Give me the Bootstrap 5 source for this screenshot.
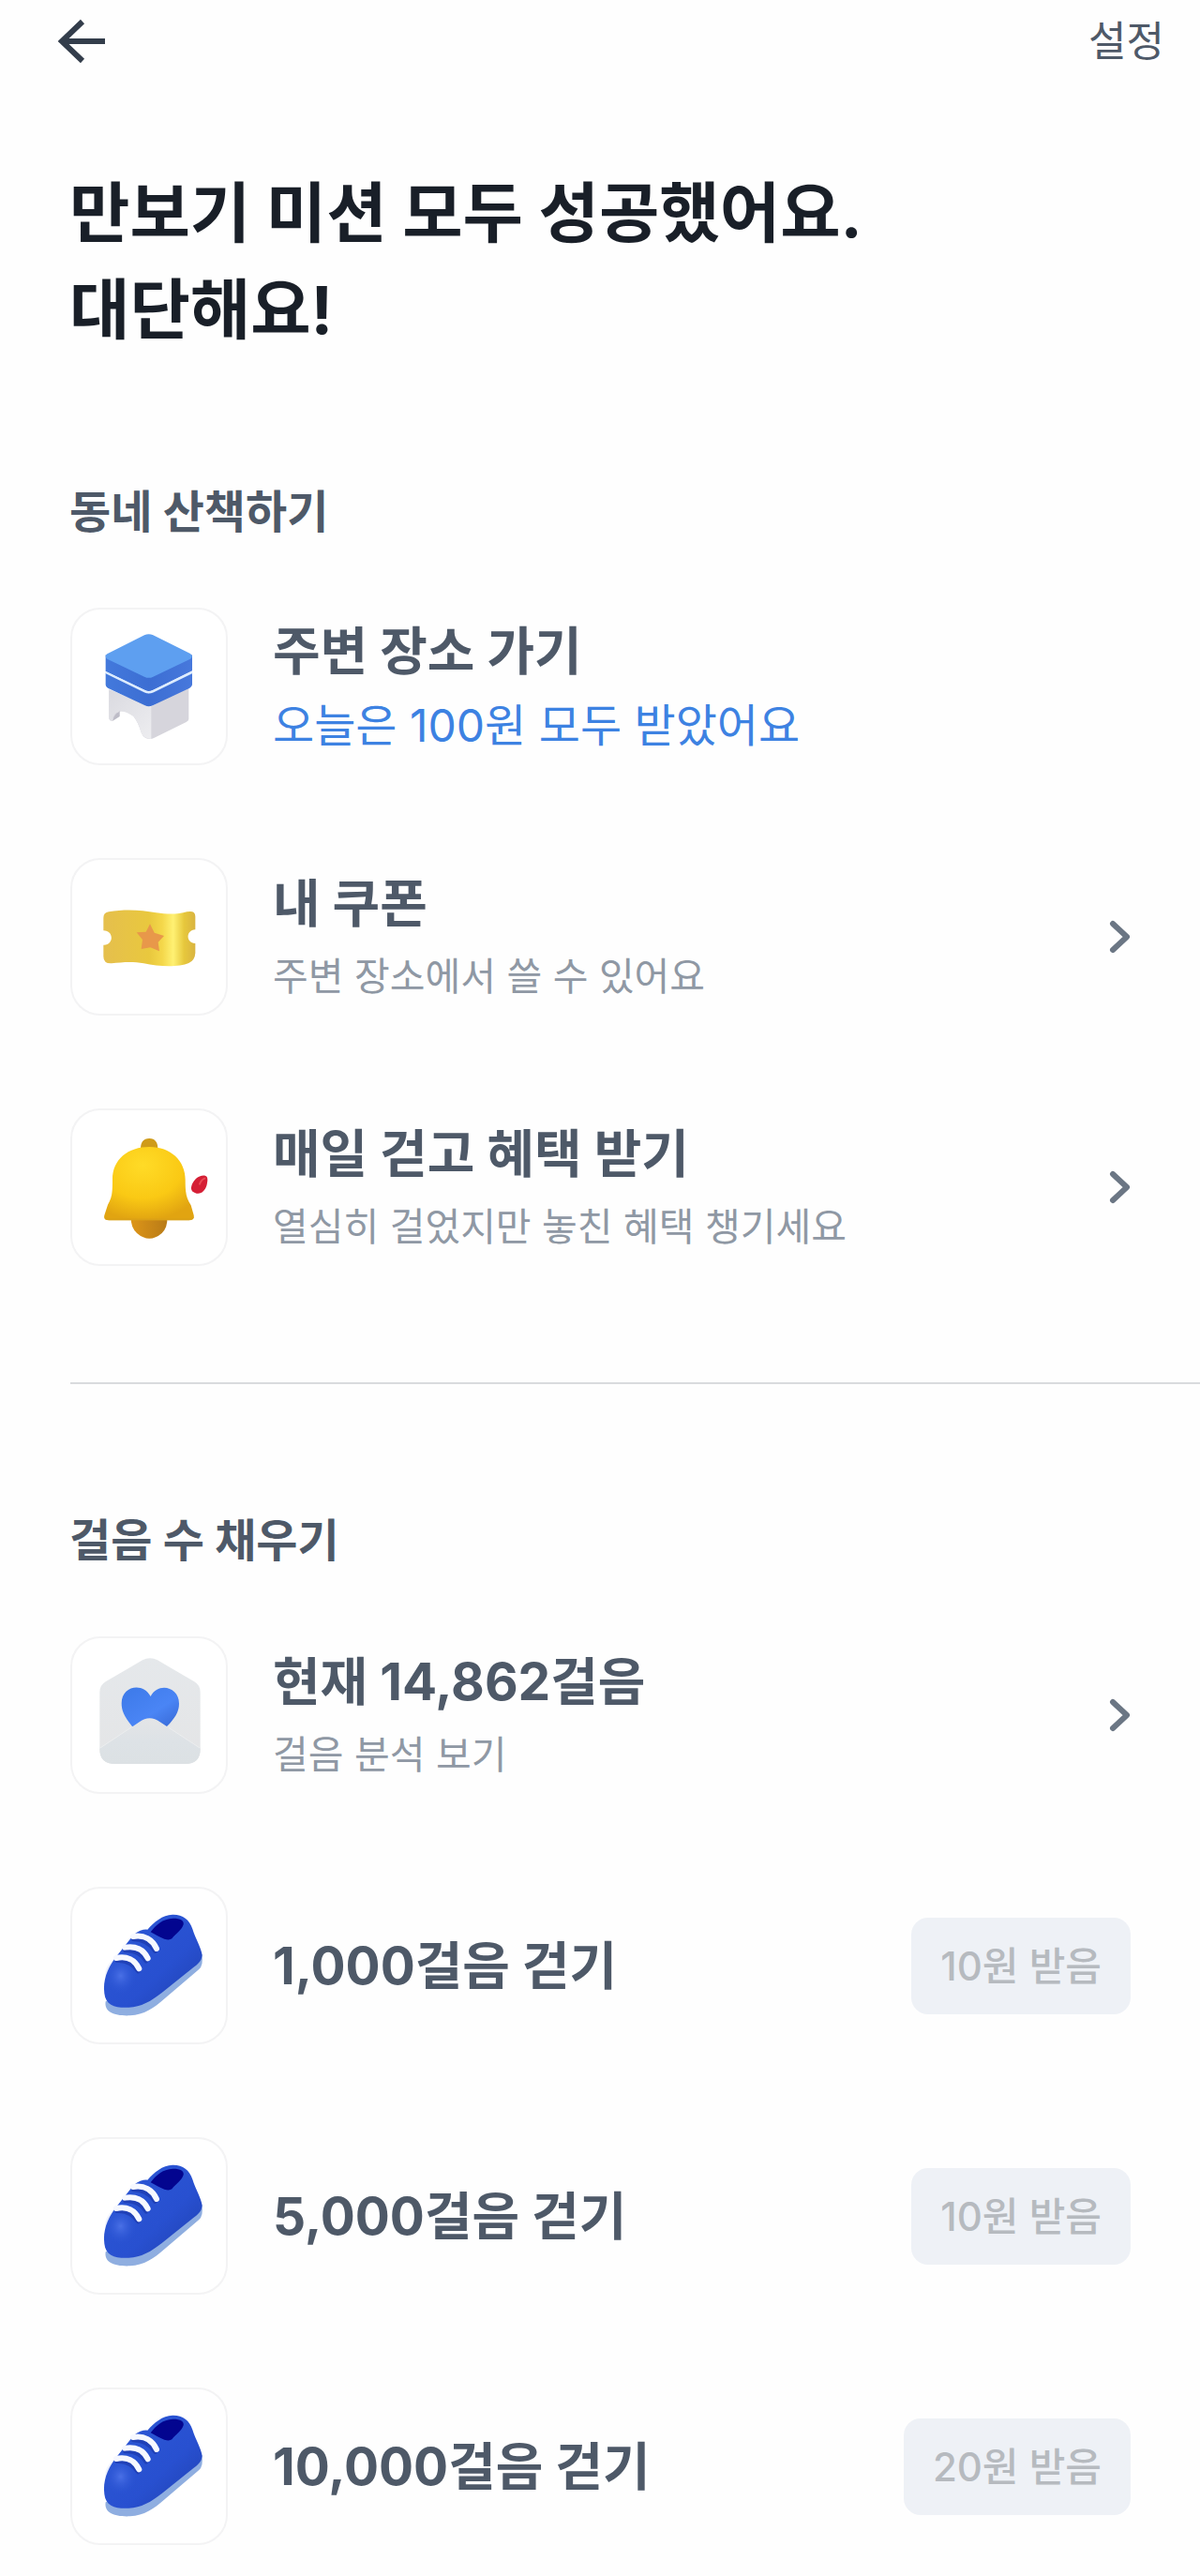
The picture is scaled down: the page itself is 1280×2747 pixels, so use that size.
<!DOCTYPE html>
<html lang="ko">
<head>
<meta charset="utf-8">
<meta name="viewport" content="width=device-width, initial-scale=1">
<title>만보기</title>
<link rel="stylesheet" href="https://cdn.jsdelivr.net/npm/bootstrap@5.3.0/dist/css/bootstrap.min.css">
<style>
  body { background: #fefefe; color: #4e5968; font-family: Inter, "Noto Sans CJK KR", sans-serif; }
  a { color: inherit; text-decoration: none; }
  .topbar { height: 88px; padding: 0 38px 0 60px; }
  .topbar svg { width: 56px; height: 56px; display: block; }
  .setting-link { font-size: 44px; line-height: 60px; color: #4e5968; }
  .page-title { font-size: 70px; line-height: 103px; font-weight: 700; color: #191f28; padding: 88px 74px 0; margin: 0; }
  .group-title { font-size: 48px; line-height: 64px; font-weight: 700; color: #4e5968; margin: 0; padding: 0 74px; }
  .walk-group { padding-top: 132px; }
  .step-group { padding-top: 135px; padding-bottom: 32px; }
  .missions { display: flex; flex-direction: column; gap: 99px; margin: 0; padding: 70px 74px 0 75px; list-style: none; }
  .mission { display: flex; align-items: center; gap: 48px; height: 168px; }
  .mission-text { padding-top: 6px; }
  .tile { flex: none; width: 168px; height: 168px; border: 2px solid #f3f3f4; border-radius: 32px; background: #fff; overflow: hidden; }
  .tile svg { display: block; width: 100%; height: 100%; }
  .mission-name { display: block; font-size: 55px; line-height: 78px; font-weight: 700; color: #4e5968; }
  .mission-note { display: block; font-size: 41px; line-height: 78px; color: #8f98a4; }
  .mission-note.reward { font-size: 48px; line-height: 82px; color: #3d82e2; }
  .chevron { flex: none; width: 24px; height: 38px; }
  .btn-got { font-size: 42px; line-height: 60px; font-weight: 500; padding: 22px 31px; height: 103px; border: 0; border-radius: 18px; }
  .btn-got:disabled { background: #eef1f6; color: #b6babf; opacity: 1; }
  .divider { height: 2px; margin: 124px 0 0 75px; border: 0; background: #d9dbde; opacity: 1; }
</style>
</head>
<body>
<svg width="0" height="0" class="position-absolute" aria-hidden="true">
  <defs>
    <linearGradient id="shoeBody" x1="0" y1="0" x2="1" y2="1">
      <stop offset="0" stop-color="#2c58d6"/><stop offset=".6" stop-color="#2850d0"/><stop offset="1" stop-color="#1f3fae"/>
    </linearGradient>
    <radialGradient id="shoeGlow"><stop offset="0" stop-color="#4a70e6"/><stop offset="1" stop-color="#2b55d4" stop-opacity="0"/></radialGradient>
    <symbol id="shoe" viewBox="51 43 492 492">
      <path d="M158 404C152 440 190 451 236 449C282 446 312 425 345 396L456 302Q472 288 466 252Z" fill="#8faee0"/>
      <path d="M154 378C149 336 163 302 186 268L248 190Q272 172 292 174C312 150 340 127 372 126C404 125 426 141 436 172C446 204 463 230 467 256C465 276 452 285 438 296L338 376C302 404 272 421 232 423C190 425 158 417 154 378Z" fill="url(#shoeBody)"/>
      <ellipse cx="206" cy="322" rx="52" ry="58" fill="url(#shoeGlow)"/>
      <path d="M302 182C318 160 340 139 374 138C398 138 410 146 407 158C401 176 383 187 370 203Q362 209 346 204C330 198 318 190 302 182Z" fill="#03058f"/>
      <g fill="none" stroke="#172f9d" stroke-width="12" stroke-linecap="round" opacity=".5">
        <path d="M246 206Q292 206 316 244"/><path d="M220 242Q264 238 288 276"/><path d="M194 274Q236 270 262 308"/>
      </g>
      <g fill="none" stroke="#f6f8ff" stroke-width="18" stroke-linecap="round">
        <path d="M246 196C282 190 308 206 321 235"/><path d="M220 231C254 225 280 238 293 266"/><path d="M192 265C226 257 252 272 265 299"/>
      </g>
    </symbol>
    <symbol id="next" viewBox="0 0 24 38">
      <path d="M5 5L20 19L5 33" fill="none" stroke="#6b7684" stroke-width="6" stroke-linecap="round" stroke-linejoin="round"/>
    </symbol>
  </defs>
</svg>

<header class="topbar d-flex align-items-center justify-content-between">
  <a href="#" aria-label="뒤로">
    <svg viewBox="0 0 56 56"><path d="M28 7L6 28L28 49M6 28H52" fill="none" stroke="#333d4b" stroke-width="6"/></svg>
  </a>
  <a href="#" class="setting-link">설정</a>
</header>

<main>
  <h1 class="page-title">만보기 미션 모두 성공했어요.<br>대단해요!</h1>

  <section class="walk-group">
    <h2 class="group-title">동네 산책하기</h2>
    <ul class="missions">
      <li class="mission">
        <span class="tile">
          <svg viewBox="51 60 492 492" aria-hidden="true">
            <defs>
              <linearGradient id="seatSide"><stop offset="0" stop-color="#4379dc"/><stop offset=".5" stop-color="#3c6ed3"/><stop offset="1" stop-color="#4778dc"/></linearGradient>
              <linearGradient id="legLeft" x1="0" y1="0" x2="1" y2="1"><stop offset="0" stop-color="#dadae0"/><stop offset="1" stop-color="#ededf0"/></linearGradient>
            </defs>
            <path d="M169 316L300 372L424 305V410Q424 416 416 420L314 470Q300 478 286 471Q276 466 272 454Q262 420 248 403Q232 386 210 383Q194 382 192 403L181 416Q168 418 169 404Z" fill="#d6d5dc"/>
            <path d="M169 316L304 372V474Q279 474 272 454Q262 420 248 403Q218 380 196 388Q180 395 181 416Q168 418 169 404Z" fill="url(#legLeft)"/>
            <path d="M181 416Q184 396 203 385V402Z" fill="#bdbcc7"/>
            <path d="M158 262L296 328L435 260V301Q434 307 427 311L309 367Q296 373 284 367L165 311Q158 307 158 301Z" fill="url(#seatSide)"/>
            <path d="M158 205L296 270L435 205V256L309 318Q296 324 284 318L158 258Z" fill="url(#seatSide)"/>
            <path d="M158 261L284 322Q296 328 309 322L435 261" fill="none" stroke="#dcecff" stroke-width="7"/>
            <path d="M163 202L282 142Q296 135 310 142L429 201Q440 210 429 218L310 275Q296 282 282 275L163 218Q153 210 163 202Z" fill="#5e9ff0"/>
          </svg>
        </span>
        <div class="mission-text">
          <span class="mission-name">주변 장소 가기</span>
          <span class="mission-note reward">오늘은 100원 모두 받았어요</span>
        </div>
      </li>
      <li>
        <a href="#" class="mission">
          <span class="tile">
            <svg viewBox="51 51 492 492" aria-hidden="true">
              <defs><linearGradient id="gold"><stop offset="0" stop-color="#e5bf4d"/><stop offset=".5" stop-color="#e9c83e"/><stop offset=".64" stop-color="#f4d74a"/><stop offset=".76" stop-color="#fff173"/><stop offset=".88" stop-color="#e6c73c"/><stop offset="1" stop-color="#d9b441"/></linearGradient></defs>
              <path d="M151 236Q151 220 168 217C220 208 272 211 320 220C358 226 392 225 418 217Q445 211 445 232V274C415 275 413 317 445 318V348Q444 372 424 381C392 395 330 393 280 382C244 375 212 378 177 382Q151 383 151 360V323C184 325 186 277 151 277Z" fill="url(#gold)"/>
              <path d="M300 256L314 284L345 294L326 314L330 343L301 331L272 336L276 306L257 283L287 281Z" fill="#e8984a"/>
            </svg>
          </span>
          <div class="mission-text flex-grow-1">
            <span class="mission-name">내 쿠폰</span>
            <span class="mission-note">주변 장소에서 쓸 수 있어요</span>
          </div>
          <svg class="chevron" aria-hidden="true"><use href="#next"/></svg>
        </a>
      </li>
      <li>
        <a href="#" class="mission">
          <span class="tile">
            <svg viewBox="51 46 492 492" aria-hidden="true">
              <defs>
                <radialGradient id="bellBody" cx=".43" cy=".25" r=".75"><stop offset="0" stop-color="#ffdb27"/><stop offset=".6" stop-color="#fac914"/><stop offset="1" stop-color="#e1a411"/></radialGradient>
                <linearGradient id="clapper"><stop offset="0" stop-color="#dd9518"/><stop offset="1" stop-color="#b87b17"/></linearGradient>
              </defs>
              <path d="M239 388H355Q357 420 338 439Q298 474 258 439Q238 420 239 388Z" fill="url(#clapper)"/>
              <path d="M270 172Q269 136 298 136Q326 137 325 172Z" fill="#cf9b19"/>
              <path d="M180 268C180 202 230 163 298 163C366 163 413 207 413 268C413 312 416 326 431 350L440 381Q443 398 426 398H168Q150 398 154 382L165 348C179 324 180 308 180 268Z" fill="url(#bellBody)"/>
              <path d="M157 388Q159 395 170 395H424Q437 395 439 387" fill="none" stroke="#d9a018" stroke-width="5" opacity=".7"/>
              <path d="M432 292C437 270 455 253 476 255Q487 257 483 278C481 298 467 315 449 312Q430 307 432 292Z" fill="#d51f35"/>
              <path d="M459 282Q464 268 475 264" fill="none" stroke="#ea4a55" stroke-width="6" stroke-linecap="round"/>
            </svg>
          </span>
          <div class="mission-text flex-grow-1">
            <span class="mission-name">매일 걷고 혜택 받기</span>
            <span class="mission-note">열심히 걸었지만 놓친 혜택 챙기세요</span>
          </div>
          <svg class="chevron" aria-hidden="true"><use href="#next"/></svg>
        </a>
      </li>
    </ul>
  </section>

  <hr class="divider">

  <section class="step-group">
    <h2 class="group-title">걸음 수 채우기</h2>
    <ul class="missions">
      <li>
        <a href="#" class="mission">
          <span class="tile">
            <svg viewBox="51 51 492 492" aria-hidden="true">
              <defs>
                <linearGradient id="heartFill" x1="0" y1="0" x2="1" y2="1"><stop offset="0" stop-color="#3c79e8"/><stop offset=".6" stop-color="#4a85f5"/><stop offset="1" stop-color="#3768d5"/></linearGradient>
                <linearGradient id="paper" x1="0" y1="0" x2="0" y2="1"><stop offset="0" stop-color="#e5e8eb"/><stop offset="1" stop-color="#e4e5e6"/></linearGradient>
                <linearGradient id="pocket" x1="0" y1="0" x2="0" y2="1"><stop offset="0" stop-color="#e4e5e7"/><stop offset=".5" stop-color="#dde2e6"/><stop offset="1" stop-color="#dce1e4"/></linearGradient>
              </defs>
              <path d="M158 190L276 121Q300 108 324 121L442 190Q461 201 461 224V405Q461 453 413 453H188Q139 453 139 405V224Q139 201 158 190Z" fill="url(#paper)"/>
              <path d="M243 333C216 300 209 281 209 259C209 205 276 190 302 237C327 190 393 207 393 260C393 286 380 307 354 333Z" fill="url(#heartFill)"/>
              <path d="M139 404L266 319Q299 294 332 319L461 403V405Q461 453 413 453H188Q139 453 139 405Z" fill="url(#pocket)"/>
              <path d="M139 403L240 336M360 337L461 403" stroke="#eceeef" stroke-width="3"/>
            </svg>
          </span>
          <div class="mission-text flex-grow-1">
            <span class="mission-name">현재 14,862걸음</span>
            <span class="mission-note">걸음 분석 보기</span>
          </div>
          <svg class="chevron" aria-hidden="true"><use href="#next"/></svg>
        </a>
      </li>
      <li class="mission">
        <span class="tile"><svg aria-hidden="true"><use href="#shoe"/></svg></span>
        <span class="mission-name flex-grow-1">1,000걸음 걷기</span>
        <button type="button" class="btn btn-got" disabled>10원 받음</button>
      </li>
      <li class="mission">
        <span class="tile"><svg aria-hidden="true"><use href="#shoe"/></svg></span>
        <span class="mission-name flex-grow-1">5,000걸음 걷기</span>
        <button type="button" class="btn btn-got" disabled>10원 받음</button>
      </li>
      <li class="mission">
        <span class="tile"><svg aria-hidden="true"><use href="#shoe"/></svg></span>
        <span class="mission-name flex-grow-1">10,000걸음 걷기</span>
        <button type="button" class="btn btn-got" disabled>20원 받음</button>
      </li>
    </ul>
  </section>
</main>
<script src="https://cdn.jsdelivr.net/npm/bootstrap@5.3.0/dist/js/bootstrap.bundle.min.js"></script>
</body>
</html>
